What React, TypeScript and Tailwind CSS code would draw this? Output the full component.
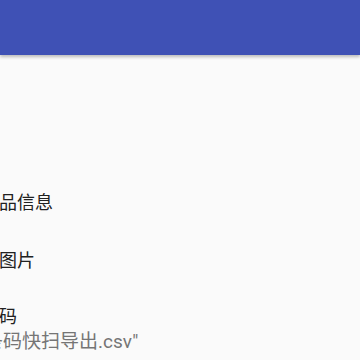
import React from "react";

export default function App() {
  const font = { fontFamily: 'Roboto, "Noto Sans CJK SC", sans-serif' };
  return (
    <div className="w-[360px] h-[360px] overflow-hidden bg-[#fafafa] relative" style={font}>
      <div className="h-[55px] bg-[#3f51b5] shadow-[0_2px_3px_rgba(0,0,0,0.25)] relative z-10" />
      <div className="ml-[-19px] pt-[118px] flex flex-col">
        <div className="h-[58px] flex items-center text-[18px] text-[#212121]">商品信息</div>
        <div className="h-[58px] flex items-center text-[18px] text-[#212121]">查图片</div>
        <div className="pt-[16px] flex flex-col">
          <div className="h-[24px] leading-[24px] text-[18px] text-[#212121]">条码</div>
          <div className="ml-[-3px] mt-[1px] h-[24px] leading-[24px] text-[19px] text-[#757575] whitespace-nowrap">"条码快扫导出.csv"</div>
        </div>
      </div>
    </div>
  );
}
